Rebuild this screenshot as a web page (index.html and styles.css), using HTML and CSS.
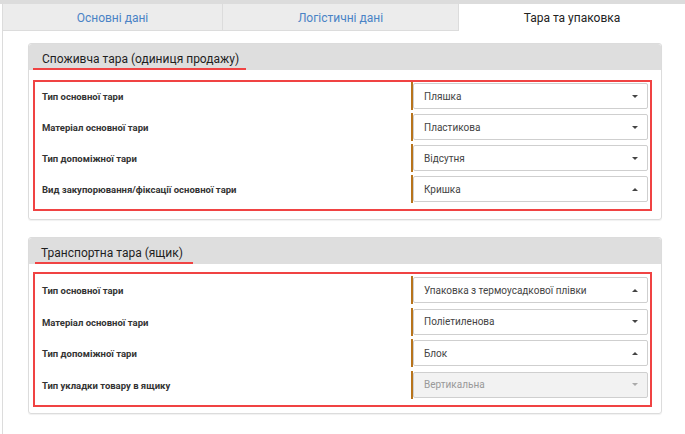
FILE: index.html
```html
<!DOCTYPE html>
<html lang="uk">
<head>
<meta charset="utf-8">
<title>Тара та упаковка</title>
<link rel="stylesheet" href="styles.css">
</head>
<body>
<div class="topstrip"></div>
<div class="page">
  <div class="tabs">
    <div class="tab tab-1">Основні дані</div>
    <div class="tab tab-2">Логістичні дані</div>
    <div class="tab tab-3 active">Тара та упаковка</div>
  </div>
  <div class="content">
    <section class="panel">
      <div class="panel-head"><span class="panel-title">Споживча тара (одиниця продажу)</span></div>
      <div class="fields">
        <div class="row"><span class="label">Тип основної тари</span><div class="sel-wrap"><div class="sel"><span>Пляшка</span><i class="caret down"></i></div></div></div>
        <div class="row"><span class="label">Матеріал основної тари</span><div class="sel-wrap"><div class="sel"><span>Пластикова</span><i class="caret down"></i></div></div></div>
        <div class="row"><span class="label">Тип допоміжної тари</span><div class="sel-wrap"><div class="sel"><span>Відсутня</span><i class="caret down"></i></div></div></div>
        <div class="row"><span class="label">Вид закупорювання/фіксації основної тари</span><div class="sel-wrap"><div class="sel"><span>Кришка</span><i class="caret up"></i></div></div></div>
      </div>
    </section>
    <section class="panel panel-2">
      <div class="panel-head"><span class="panel-title title-2">Транспортна тара (ящик)</span></div>
      <div class="fields fields-2">
        <div class="row"><span class="label">Тип основної тари</span><div class="sel-wrap"><div class="sel"><span>Упаковка з термоусадкової плівки</span><i class="caret up"></i></div></div></div>
        <div class="row"><span class="label">Матеріал основної тари</span><div class="sel-wrap"><div class="sel"><span>Поліетиленова</span><i class="caret down"></i></div></div></div>
        <div class="row"><span class="label">Тип допоміжної тари</span><div class="sel-wrap"><div class="sel"><span>Блок</span><i class="caret up"></i></div></div></div>
        <div class="row"><span class="label">Тип укладки товару в ящику</span><div class="sel-wrap"><div class="sel disabled"><span>Вертикальна</span><i class="caret down"></i></div></div></div>
      </div>
    </section>
  </div>
</div>
</body>
</html>
```
FILE: styles.css
```css
* { box-sizing: border-box; }
html, body { margin: 0; padding: 0; background: #fff; }
body {
  font-family: Roboto, "Noto Sans", "DejaVu Sans", sans-serif;
  color: #333;
  height: 434px;
  overflow: hidden;
}
.topstrip { height: 4px; background: #dcdcdc; }
.page {
  margin-left: 2px;
  border-left: 1px solid #dcdcdc;
  height: 430px;
}
.tabs {
  display: flex;
  height: 27px;
}
.tab {
  height: 27px;
  display: flex;
  align-items: center;
  justify-content: center;
  font-size: 12px;
  color: #4a83c6;
  background: #ececec;
  border-bottom: 1px solid #dcdcdc;
  border-right: 1px solid #dcdcdc;
  padding-top: 1px;
}
.tab-1 { width: 220px; }
.tab-2 { width: 236px; }
.tab-3 { flex: 1; border-right: 0; }
.tab.active {
  background: #fff;
  color: #222;
  border-bottom-color: #fff;
}
.content {
  padding: 12px 23px 0 25px;
}
.panel {
  border: 1px solid #dcdcdc;
  border-radius: 3px;
  box-shadow: 0 1px 1px rgba(0,0,0,0.06);
  padding-bottom: 8px;
}
.panel-2 { margin-top: 17px; padding-bottom: 6px; }
.panel-head {
  height: 26px;
  background: #dedede;
  padding-top: 4px;
  padding-left: 4px;
  border-radius: 3px 3px 0 0;
}
.panel-title {
  display: inline-block;
  font-size: 12px;
  line-height: 17px;
  color: #1e1e1e;
  padding: 0 7px 0 9px;
  border-bottom: 2px solid #f04343;
}
.title-2 { padding: 0 10px 0 6px; margin-left: 2px; }
.fields {
  margin: 10px 9px 0 4px;
  border: 2px solid #f04343;
  padding: 0 2px 6px 7px;
  display: flex;
  flex-direction: column;
  gap: 3px;
}
.fields-2 { margin-top: 8px; padding-top: 2px; gap: 3.5px; }
.row {
  display: flex;
  align-items: center;
}
.label {
  flex: 1;
  font-size: 9.5px;
  font-weight: 700;
  color: #333;
  padding-top: 1px;
}
.sel-wrap {
  width: 237px;
  border-left: 2px solid #b8741c;
  padding: 1px 0;
}
.sel {
  height: 26px;
  border: 1px solid #cfcfcf;
  border-radius: 2px;
  background: #fff;
  display: flex;
  align-items: center;
  justify-content: space-between;
  padding: 0 9px 0 10px;
  font-size: 10px;
  color: #444;
}
.sel.disabled { background: #f2f2f2; color: #999; }
.caret {
  width: 0;
  height: 0;
  border-left: 3.5px solid transparent;
  border-right: 3.5px solid transparent;
}
.caret.down { border-top: 3.5px solid #444; }
.caret.up { border-bottom: 3.5px solid #444; }
.sel.disabled .caret.down { border-top-color: #aaa; }
```
